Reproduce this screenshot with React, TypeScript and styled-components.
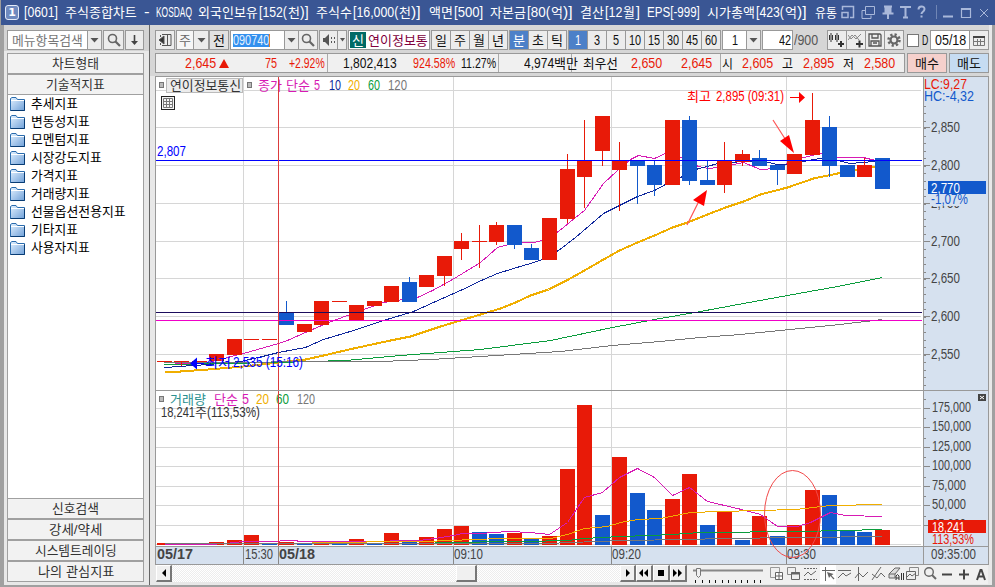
import React, { useLayoutEffect, useRef, useState } from 'react';
import styled, { createGlobalStyle, css } from 'styled-components';

const FONT = `"Liberation Sans Narrow", "Liberation Sans", "Noto Sans CJK KR", sans-serif`;
const RED = '#e81a08';
const BLUE = '#1259cc';
const MAGENTA = '#d71ab4';
const NAVY = '#10289c';
const GOLD = '#f0ae00';
const GREEN = '#0a9c3c';
const GRAY = '#777777';

const Global = createGlobalStyle`
  body { margin: 0; background: #e8e8e8; }
  * { box-sizing: border-box; }
`;

/* ---------- text fitted to a fixed column ---------- */

const isHangul = (t: string) => /[가-힣]/.test(t);

const FitBox = styled.span<{ $w: number; $ml?: number; $c?: string; $s: number }>`
  display: inline-block;
  flex: none;
  width: ${p => p.$w}px;
  height: 17px;
  line-height: 17px;
  margin-left: ${p => p.$ml ?? 0}px;
  color: ${p => p.$c ?? 'inherit'};
  font-size: ${p => p.$s}px;
  white-space: nowrap;
  text-align: left;
`;
const FitInner = styled.span`
  display: inline-block;
  transform-origin: 0 50%;
  line-height: 17px;
`;

function Fit({ w, ml, c, s, children }: { w: number; ml?: number; c?: string; s?: number; children: string }) {
  const ref = useRef<HTMLSpanElement>(null);
  const [k, setK] = useState(1);
  useLayoutEffect(() => {
    if (ref.current) setK(w / ref.current.offsetWidth);
  }, [w, children]);
  return (
    <FitBox $w={w} $ml={ml} $c={c} $s={s ?? (isHangul(children) ? 13 : 14.5)}>
      <FitInner ref={ref} style={{ transform: `scaleX(${k})` }}>{children}</FitInner>
    </FitBox>
  );
}

/* ---------- frame ---------- */

const Win = styled.div`
  width: 995px;
  height: 587px;
  overflow: hidden;
  display: flex;
  flex-direction: column;
  font-family: ${FONT};
  font-size: 13px;
  color: #111;
  background: #9c9c9c;
`;
const TitleBar = styled.header`
  height: 25px;
  margin-left: 1px;
  display: flex;
  align-items: center;
  background: #3a5694;
  color: #fff;
`;
const Badge = styled.span`
  width: 14px;
  height: 15px;
  margin: 0 5px 0 4px;
  border: 1px solid #e4ebf8;
  border-radius: 3px;
  background: #6f8abf;
  font: bold 11px/13px "DejaVu Sans", sans-serif;
  text-align: center;
`;
const TitleIcons = styled.svg`
  margin-left: 4px;
  flex: none;
`;
const Body = styled.div`
  height: 562px;
  display: flex;
  background: #e8e8e8;
  border: solid #a0a0a0;
  border-width: 0 3px 2px 4px;
`;
const Side = styled.aside`
  width: 146px;
  flex: none;
  padding: 5px 5px 0 3px;
  border-right: 1px solid #666;
  background: linear-gradient(#d4d4d4 0 26px, #e8e8e8 26px);
`;
const Main = styled.main`
  width: 839px;
  flex: none;
  padding: 5px 0 0 5px;
  background: linear-gradient(#d6d6d6 0 51px, #e8e8e8 51px);
`;

/* ---------- toolbar ---------- */

const Bar = styled.div`
  display: flex;
  align-items: center;
  height: 20px;
  margin-bottom: 3px;
`;
const Cell = styled.div<{ $w: number; $ml?: number; $bg?: string; $c?: string; $join?: boolean }>`
  width: ${p => p.$w}px;
  height: 20px;
  flex: none;
  display: flex;
  align-items: center;
  justify-content: center;
  margin-left: ${p => p.$ml ?? 0}px;
  border: 1px solid #999;
  ${p => p.$join && css`border-left: 0;`}
  background: ${p => p.$bg ?? '#ececec'};
  color: ${p => p.$c ?? '#111'};
  overflow: hidden;
`;
const Selected = styled.span`
  background: #3390ee;
  height: 13px;
  display: flex;
  align-items: center;
  border-right: 1px solid #e08030;
  margin-right: 13px;
`;
const NewTag = styled.span`
  width: 16px;
  height: 16px;
  background: #006a66;
  color: #fff;
  display: flex;
  justify-content: center;
  align-items: center;
`;
const Check = styled.span`
  width: 13px;
  height: 13px;
  margin: 0 3px 0 3px;
  background: #fff;
  border: 1px solid #777;
`;
const Drop = () => <svg width="9" height="6"><path d="M0.5 1h8L4.5 5.5z" fill="#555" /></svg>;
const Lens = () => (
  <svg width="16" height="16" fill="none" stroke="#666">
    <circle cx="6.5" cy="6.5" r="4" strokeWidth="1.6" /><path d="M9.5 9.5l4.5 4.5" strokeWidth="2.2" />
  </svg>
);

const Quote = styled.div`
  width: 750px;
  height: 20px;
  display: flex;
  border: 1px solid #999;
  background: #f0f0f0;
`;
const QuoteGroup = styled.div<{ $w: number }>`
  width: ${p => p.$w}px;
  flex: none;
  display: flex;
  align-items: center;
  border-right: 1px solid #aaa;
  &:last-child { border-right: 0; }
`;
const Up = styled.svg`margin-left: 3px;`;

/* ---------- sidebar ---------- */

const Header = styled.div<{ $open?: boolean }>`
  height: ${p => (p.$open ? 20 : 21)}px;
  border: 1px solid #a0a0a0;
  border-bottom-width: ${p => (p.$open ? 0 : 1)}px;
  display: flex;
  align-items: center;
  justify-content: center;
  background: #f2f2f2;
  color: #333;
`;
const List = styled.ul`
  height: 404px;
  margin: 0;
  padding: 0 0 0 2px;
  list-style: none;
  background: #fff;
  border: solid #a0a0a0;
  border-width: 1px 1px 0 1px;
`;
const Item = styled.li`
  height: 18px;
  display: flex;
  align-items: center;
  padding-bottom: 1px;
  color: #000;
`;
const Folder = () => (
  <svg width="15" height="14" viewBox="0 0 15 14">
    <defs><linearGradient id="fo" x1="0" y1="0" x2="1" y2="1"><stop offset="0" stopColor="#e4f2ff" /><stop offset="1" stopColor="#6fa0d8" /></linearGradient></defs>
    <path d="M.5 13.5v-12L2 .5h4L7.5 2.5h7v11z" fill="url(#fo)" stroke="#2a6cae" />
    <path d="M1 3.500h13" stroke="#fff" /><path d="M.5 13.500h14v-10" fill="none" stroke="#083c74" />
  </svg>
);

/* ---------- chart ---------- */

const Chart = styled.section`
  width: 834px;
  height: 489px;
  display: grid;
  grid-template-columns: 767px 64px;
  grid-template-rows: 313px 155px 17px;
  gap: 1px;
  background: #999;
  border: 1px solid #999;
`;
const Pane = styled.svg<{ $bg: string; $over?: boolean }>`
  display: block;
  width: 100%;
  height: 100%;
  background: ${p => p.$bg};
  font-family: ${FONT};
  ${p => p.$over && css`overflow: visible; position: relative; z-index: 1;`}
`;

function Tx({ x, y, w, c = '#444', s, b, children }: { x: number; y: number; w: number; c?: string; s?: number; b?: boolean; children: string }) {
  return (
    <text x={x} y={y} textLength={w} lengthAdjust="spacingAndGlyphs" fill={c} fontSize={s ?? (isHangul(children) ? 13 : 14.5)} fontWeight={b ? 700 : 400}>{children}</text>
  );
}

// left, body top, body bottom, wick top, wick bottom, rising, volume top
type Candle = [number, number, number, number, number, number, number];
const candles: Candle[] = [
  [157, 361, 362, 361, 362, 1, 543], [174, 361, 362, 361, 366, 1, 544], [192, 361, 362, 361, 362, 1, 544],
  [209, 354, 361, 354, 361, 1, 542], [227, 339, 355, 339, 355, 1, 540], [244, 339, 340, 339, 340, 1, 535],
  [262, 339, 340, 339, 340, 1, 544], [279, 312, 325, 301, 325, 0, 542], [297, 324, 332, 324, 332, 1, 544],
  [314, 301, 325, 301, 325, 1, 541], [332, 301, 302, 301, 302, 1, 544], [349, 305, 320, 305, 320, 1, 539],
  [367, 301, 306, 301, 306, 1, 544], [384, 286, 302, 286, 302, 1, 533], [402, 282, 302, 277, 302, 0, 541],
  [419, 275, 287, 275, 287, 1, 537], [437, 256, 276, 256, 286, 1, 529], [454, 241, 249, 233, 260, 1, 526],
  [472, 241, 242, 225, 268, 1, 532], [489, 225, 242, 222, 245, 1, 534], [507, 225, 245, 225, 249, 0, 533],
  [524, 248, 260, 244, 260, 0, 538], [542, 218, 260, 218, 260, 1, 536], [560, 169, 219, 154, 223, 1, 469],
  [577, 160, 177, 120, 208, 1, 405], [595, 116, 151, 116, 166, 1, 515], [612, 160, 170, 142, 211, 1, 457],
  [630, 160, 166, 160, 204, 0, 493], [647, 165, 185, 160, 196, 0, 510], [665, 120, 185, 120, 185, 1, 499],
  [682, 120, 181, 116, 185, 0, 474], [700, 180, 185, 161, 185, 0, 525], [717, 161, 185, 142, 193, 1, 512],
  [735, 154, 162, 150, 166, 1, 540], [752, 158, 166, 150, 166, 0, 516], [770, 165, 170, 165, 185, 0, 536],
  [787, 154, 174, 154, 174, 1, 525], [805, 120, 155, 93, 155, 1, 490], [822, 127, 166, 116, 177, 0, 495],
  [840, 165, 177, 165, 177, 0, 531], [857, 165, 177, 158, 177, 1, 532], [875, 158, 189, 158, 189, 0, 530],
];
const blueVolumes = new Set([262, 297, 332, 367, 402, 472, 489, 524, 595, 630, 647, 700, 735, 770, 822, 840, 857]);

const ma = {
  m: '164,364 208,362 250,351 278,343 287,340 305,332 328,322 363,309 383,302 417,297 432,290 452,279 462,273 480,262 497,247 508,244 522,242 533,242 542,240 558,231 575,217 584,210 603,183 617,170 630,159 638,155 654,158 665,153 682,157 698,166 708,168 717,167 743,162 760,169 775,168 787,163 803,157 820,153 837,157 863,157 875,160 883,160',
  n: '164,367 208,364 240,361 262,356 278,352 305,347 323,339 353,330 383,320 413,311 433,302 460,290 483,279 497,273 513,268 530,263 542,259 558,250 575,237 603,213 617,206 637,196 654,190 665,184 682,176 698,168 707,166 717,163 743,161 760,160 777,164 793,164 807,160 820,158 837,160 850,163 873,161 883,161',
  y: '164,371 180,371 208,369 243,366 287,361 305,359 323,355 353,348 390,340 410,336 440,326 480,314 500,308 515,302 530,295 548,289 566,280 584,270 603,259 619,250 637,242 654,235 672,227 687,222 707,214 725,207 743,201 760,194 787,187 813,178 837,173 857,169 875,166 883,165',
  g: '164,364 278,362 310,361 345,360 400,355 480,349 550,340 612,327 654,319 700,311 743,303 787,295 837,286 882,277',
  k: '164,362 380,361 430,359 480,356 560,351 612,345 660,341 700,337 740,334 790,329 830,325 865,321 882,319',
};
const vma = {
  m: '164,544 208,544 225,543 243,541 278,541 281,540 296,540 298,541 380,541 400,540 418,540 435,538 453,535 462,533 480,533 508,531 530,532 549,534 567,522 584,497 602,492 619,477 637,468 654,477 672,495 689,487 707,501 737,508 760,514 777,526 797,526 810,522 830,512 845,515 882,516',
  y: '312,542 420,541 453,540 470,539 505,538 550,538 567,534 584,528 607,526 620,522 637,519 660,518 690,512 720,511 795,509 830,505 882,504',
  g: '435,542 525,541 567,540 584,538 620,536 650,535 672,534 700,532 800,531 882,529',
  k: '164,543 550,543 567,542 600,541 620,540 690,539 720,538 800,537 882,536',
};
const Line = ({ p, c, w = 1 }: { p: string; c: string; w?: number }) => (
  <polyline points={p} transform="translate(.5 .5)" fill="none" stroke={c} strokeWidth={w} shapeRendering="crispEdges" />
);
const columns = [243, 453, 611, 786];
const priceRows: [number, string][] = [[127, '2,850'], [165, '2,800'], [203, '2,750'], [241, '2,700'], [278, '2,650'], [316, '2,600'], [354, '2,550']];
const volumeRows: [number, string][] = [[408, '175,000'], [427, '150,000'], [447, '125,000'], [466, '100,000'], [486, '75,000'], [505, '50,000'], [525, '25,000']];

const Marker = ({ x, y }: { x: number; y: number }) => <rect x={x + 0.5} y={y + 0.5} width="4" height="5" fill="#bbb" stroke="#777" />;

function PricePane() {
  return (
    <Pane $bg="#fff" viewBox="156 77 767 313">
      <g fill="#d6d6d6">
        {[90, ...priceRows.map(r => r[0])].map(y => <rect key={y} x="156" y={y} width="765" height="1" />)}
        {columns.map(x => <rect key={x} x={x} y="77" width="1" height="313" />)}
      </g>
      <Line p={ma.m} c={MAGENTA} />
      <Line p={ma.n} c={NAVY} />
      <Line p={ma.y} c={GOLD} w={2} />
      <Line p={ma.g} c={GREEN} />
      <Line p={ma.k} c={GRAY} />
      {candles.map(([x, t, b, wt, wb, up]) => (
        <g key={x} fill={up ? RED : BLUE}>
          <rect x={x} y={t} width="15" height={b - t} />
          <rect x={x + 7} y={wt} width="1" height={wb - wt} />
        </g>
      ))}
      <rect x="156" y="312" width="766" height="1" fill="#1c0c5c" />
      <rect x="156" y="320" width="766" height="1" fill="#f000c8" />
      <rect x="156" y="160" width="766" height="1" fill="#0000ff" />
      <rect x="166.500" y="78.500" width="76" height="14" fill="#ececec" stroke="#bbb" />
      <Marker x={159} y={82} /><Marker x={247} y={82} />
      <Tx x={170} y={90} w={71} c="#333">연이정보통신</Tx>
      <Tx x={258} y={90} w={24} c={MAGENTA}>종가</Tx>
      <Tx x={286} y={90} w={24} c={MAGENTA}>단순</Tx>
      <Tx x={314} y={90} w={6} c={MAGENTA}>5</Tx>
      <Tx x={329} y={90} w={12} c={NAVY}>10</Tx>
      <Tx x={348} y={90} w={12} c={GOLD}>20</Tx>
      <Tx x={368} y={90} w={12} c={GREEN}>60</Tx>
      <Tx x={388} y={90} w={19} c={GRAY}>120</Tx>
      <rect x="278" y="77" width="1" height="313" fill="#dc3c3c" />
      <g fill="none" stroke="#222"><rect x="161.500" y="96.500" width="13" height="13" fill="#f4f4f4" /><path d="M163.500 98.500h9v9h-9zM163.500 101.500h9M163.500 104.500h9M166.500 98.500v9M169.500 98.500v9" stroke="#777" /></g>
      <Tx x={157} y={156} w={29} c="#00f">2,807</Tx>
      <Tx x={205} y={367} w={26} c="#00f">최저</Tx>
      <Tx x={233} y={367} w={70} c="#00f">2,535 (15:16)</Tx>
      <path d="M190 363.500l7-6v12zM197 363h7v1h-7z" fill="#00f" />
      <Tx x={687} y={101} w={24} c="#f00">최고</Tx>
      <Tx x={716} y={101} w={68} c="#f00">2,895 (09:31)</Tx>
      <path d="M790 97h9v1h-9zM799 92l6 5.500-6 5.500z" fill="#f00" />
      <path d="M773 120l16 25M687 225l12-24" stroke="#f55" strokeWidth="1.200" />
      <path d="M794 153l-14-12 9-6zM707 190l-14 10 11 6z" fill="#f00" />
    </Pane>
  );
}

function VolumePane() {
  return (
    <Pane $bg="#fff" $over viewBox="156 391 767 155">
      <g fill="#d6d6d6">
        {[...volumeRows.map(r => r[0]), 544].map(y => <rect key={y} x="156" y={y} width="765" height="1" />)}
        {columns.map(x => <rect key={x} x={x} y="391" width="1" height="155" />)}
      </g>
      <g>{candles.map(c => <rect key={c[0]} x={c[0]} y={c[6]} width="15" height={545 - c[6]} fill={blueVolumes.has(c[0]) ? BLUE : RED} />)}</g>
      <Line p={vma.m} c={MAGENTA} />
      <Line p={vma.y} c={GOLD} />
      <Line p={vma.g} c={GREEN} />
      <Line p={vma.k} c={GRAY} />
      <Marker x={159} y={396} />
      <Tx x={170} y={404} w={36} c="#2a9090">거래량</Tx>
      <Tx x={214} y={404} w={24} c={MAGENTA}>단순</Tx>
      <Tx x={242} y={404} w={7} c={MAGENTA}>5</Tx>
      <Tx x={256} y={404} w={13} c={GOLD}>20</Tx>
      <Tx x={276} y={404} w={13} c={GREEN}>60</Tx>
      <Tx x={297} y={404} w={18} c={GRAY}>120</Tx>
      <Tx x={161} y={417} w={34} c="#333">18,241</Tx>
      <Tx x={195} y={417} w={12} c="#333">주</Tx>
      <Tx x={207} y={417} w={53} c="#333">(113,53%)</Tx>
      <rect x="278" y="391" width="1" height="155" fill="#dc3c3c" />
      <ellipse cx="792.500" cy="514" rx="28" ry="43.500" fill="none" stroke="#f24a4a" />
    </Pane>
  );
}

function PriceAxis() {
  const minor: number[] = [];
  for (let i = 0; i < 38; i++) minor.push(Math.round(105.500 + i * 7.550));
  return (
    <Pane $bg="#d6e1ef" viewBox="924 77 64 313">
      {minor.map(y => <rect key={y} x="924" y={y} width="2" height="1" fill="#888" />)}
      {priceRows.map(([y, t]) => (
        <g key={y}><rect x="924" y={y} width="6" height="1" fill="#888" /><Tx x={931} y={y + 4.500} w={29}>{t}</Tx></g>
      ))}
      <rect x="930" y="193" width="42" height="13" fill="#d6e1ef" />
      <rect x="928" y="181" width="58" height="13" fill={BLUE} />
      <Tx x={931} y={192.500} w={29} c="#fff">2,770</Tx>
      <Tx x={931} y={204} w={37} c={BLUE}>-1,07%</Tx>
      <Tx x={924} y={89} w={43} c={RED}>LC:9,27</Tx>
      <Tx x={924} y={101} w={50} c={BLUE}>HC:-4,32</Tx>
    </Pane>
  );
}

function VolumeAxis() {
  return (
    <Pane $bg="#d6e1ef" viewBox="924 391 64 155">
      {volumeRows.map(([y, t]) => (
        <g key={y}>
          <rect x="924" y={y} width="6" height="1" fill="#888" /><rect x="924" y={y - 9} width="2" height="1" fill="#888" />
          <Tx x={932} y={y + 4} w={t.length === 7 ? 39 : 34}>{t}</Tx>
        </g>
      ))}
      <rect x="930" y="532" width="48" height="13" fill="#d6e1ef" />
      <rect x="928" y="520" width="58" height="13" fill={RED} />
      <Tx x={932} y={531.500} w={33} c="#fff">18,241</Tx>
      <Tx x={932} y={543.500} w={42} c={RED}>113,53%</Tx>
      <rect x="978" y="394" width="8" height="7" fill="#444" /><path d="M980 396l4 3M984 396l-4 3" stroke="#fff" />
    </Pane>
  );
}

function TimeAxis() {
  return (
    <Pane $bg="#d6e1ef" viewBox="156 547 767 17">
      {columns.map(x => <rect key={x} x={x} y="547" width="1" height="17" fill="#888" />)}
      <rect x="278" y="547" width="1" height="17" fill="#888" />
      <Tx x={157} y={559} w={36} b>05/17</Tx>
      <Tx x={245} y={559} w={28}>15:30</Tx>
      <Tx x={279} y={559} w={36} b>05/18</Tx>
      <Tx x={454} y={559} w={29}>09:10</Tx>
      <Tx x={612} y={559} w={29}>09:20</Tx>
      <Tx x={787} y={559} w={29}>09:30</Tx>
    </Pane>
  );
}

/* ---------- bottom bar ---------- */

const Bottom = styled.footer`
  width: 834px;
  height: 19px;
  display: flex;
  padding-left: 1px;
`;
const Push = styled.div<{ $w: number }>`
  width: ${p => p.$w}px;
  height: 17px;
  flex: none;
  display: flex;
  align-items: center;
  justify-content: center;
  background: #f0f0f0;
  border: 1px solid #fff;
  border-right: 2px solid #777;
  border-bottom: 2px solid #777;
`;
const Track = styled.div<{ $w: number }>`
  width: ${p => p.$w}px;
  height: 17px;
  flex: none;
  background: repeating-conic-gradient(#fff 0 25%, #ededed 0 50%) 0 0 / 2px 2px;
`;
const Tools = styled.svg`flex: none; background: #f0f0f0;`;
const Glyph = ({ d }: { d: string }) => <svg width="12" height="10" viewBox="0 0 12 10"><path d={d} fill="#000" /></svg>;

const periods = ['일', '주', '월', '년'];
const units = ['분', '초', '틱'];
const minutes = ['1', '3', '5', '10', '15', '30', '45', '60'];
const folders = ['추세지표', '변동성지표', '모멘텀지표', '시장강도지표', '가격지표', '거래량지표', '선물옵션전용지표', '기타지표', '사용자지표'];
const titleParts: [string, number, number][] = [
  ['[0601]', 0, 34], ['주식종합차트', 7, 72], ['-', 7, 6], ['KOSDAQ', 6, 36],
  ['외국인보유', 6, 60], ['[152(', 1, 28], ['천', 1, 12], [')]', 0, 9],
  ['주식수', 7, 36], ['[16,000(', 1, 45], ['천', 1, 12], [')]', 0, 10],
  ['액면', 8, 24], ['[500]', 1, 29], ['자본금', 7, 36], ['[80(', 1, 23], ['억', 1, 12], [')]', 0, 10],
  ['결산', 7, 24], ['[12', 1, 17], ['월', 1, 12], [']', 1, 4], ['EPS[-999]', 7, 53],
  ['시가총액', 7, 48], ['[423(', 1, 28], ['억', 1, 12], [')]', 0, 10], ['유통', 8, 22],
];

function Toolbar() {
  return (
    <Bar>
      <Cell $w={20}><svg width="14" height="14" fill="none" stroke="#555"><path d="M4 1.500h9v11H4M9.500 2v10" /><path d="M1 7l5-4v8z" fill="#333" /><path d="M2.500 2v2M2.500 10v2" /></svg></Cell>
      <Cell $w={18} $ml={1} $bg="#f6f6f6"><Fit w={12} c="#666">주</Fit></Cell>
      <Cell $w={15} $join><Drop /></Cell>
      <Cell $w={20} $ml={0} $bg="#e2e2e2"><Fit w={12}>전</Fit></Cell>
      <Cell $w={55} $ml={1} $bg="#fff"><Selected><Fit w={36} c="#e4f0ff">090740</Fit></Selected></Cell>
      <Cell $w={14} $join><Drop /></Cell>
      <Cell $w={19} $join><Lens /></Cell>
      <Cell $w={19} $ml={1}><svg width="14" height="12" fill="#555"><path d="M1 4h2l4-4v12l-4-4H1z" /><path d="M9 3h1v2H9zM9 7h1v2H9zM12 3h1v2h-1zM12 7h1v2h-1z" /></svg></Cell>
      <Cell $w={9} $join><svg width="5" height="4"><path d="M0 0h5L2.500 3.500z" fill="#555" /></svg></Cell>
      <Cell $w={82} $ml={1} $bg="#fff"><NewTag><Fit w={12}>신</Fit></NewTag><Fit w={60} ml={2} c="#80003c">연이정보통</Fit></Cell>
      {periods.map((p, i) => <Cell key={p} $w={i ? 19 : 20} $ml={i ? 0 : 1} $join={i > 0}><Fit w={12}>{p}</Fit></Cell>)}
      {units.map((p, i) => <Cell key={p} $w={i ? 19 : 20} $ml={i ? 0 : 1} $join={i > 0} $bg={i ? undefined : '#4c80c8'} $c={i ? undefined : '#fff'}><Fit w={12}>{p}</Fit></Cell>)}
      {minutes.map((p, i) => <Cell key={p} $w={i ? 19 : 20} $ml={i ? 0 : 1} $join={i > 0} $bg={i ? undefined : '#4c80c8'} $c={i ? undefined : '#fff'}><Fit w={p.length * 6}>{p}</Fit></Cell>)}
      <Cell $w={25} $ml={1} $bg="#fff"><Fit w={6}>1</Fit></Cell>
      <Cell $w={14} $join><Drop /></Cell>
      <Cell $w={31} $ml={1} $bg="#fff"><Fit w={12} ml={14}>42</Fit></Cell>
      <Fit w={24} ml={1} c="#555">/900</Fit>
      <Cell $w={20} $ml={9}><svg width="16" height="16" fill="#333"><path d="M0 3h4v5H0zM1.500 1v9h1V1zM6 3h4v5H6zM7.500 1v9h1V1zM9 11h6v2H9zM11 9h2v6h-2z" /></svg></Cell>
      <Cell $w={19} $join><svg width="16" height="16"><path d="M0 8l4-5 4 4 5-5M0 3l3 4 4-4 4 5" fill="none" stroke="#888" /><path d="M8 11h7v2H8zM10.500 8.500h2v7h-2z" fill="#333" /></svg></Cell>
      <Cell $w={19} $join><svg width="14" height="14" fill="none" stroke="#555" strokeWidth="1.300"><path d="M1 1h11l1 1v11H1zM4 1v4h6V1M3 13V8h8v5M5 10h4" /></svg></Cell>
      <Cell $w={19} $join><svg width="14" height="14"><circle cx="7" cy="7" r="5.500" fill="none" stroke="#666" strokeWidth="2.500" strokeDasharray="2.200 2.100" /><circle cx="7" cy="7" r="3.500" fill="none" stroke="#666" strokeWidth="2.200" /></svg></Cell>
      <Check />
      <Fit w={6}>D</Fit>
      <Cell $w={40} $ml={2} $bg="#fff"><Fit w={31}>05/18</Fit></Cell>
      <Cell $w={19} $join><svg width="12" height="11" fill="none" stroke="#777"><path d="M.5 1.500h11v9H.5zM4.500 4v6M7.500 4v6M1 6.500h10" /><path d="M0 2h12" stroke="#444" strokeWidth="2" /></svg></Cell>
    </Bar>
  );
}

export default function App() {
  return (
    <Win>
      <Global />
      <TitleBar>
        <Badge>1</Badge>
        {titleParts.map(([t, ml, w], i) => <Fit key={i} w={w} ml={ml} s={isHangul(t) ? 13 : 14}>{t}</Fit>)}
        <TitleIcons width="150" height="25" viewBox="841 0 150 25" fill="none" stroke="#a9b8da">
          <path d="M842.500 10V6.500h11v11H850M842 12.500h6v5h-6z" strokeWidth="1.500" />
          <path d="M865.500 6.500h9v8h-9zM865 10.500h-3v8h9v-3" />
          <path d="M884 6.500h8M882.500 13.500h11M888 14v5" strokeWidth="2" />
          <path d="M885 7h6v6h-6z" fill="#a9b8da" />
          <path d="M901 8V7h9v1M905.500 7v11M903 17.500h5" strokeWidth="2" />
          <path d="M918.500 9.500c0-4 6-4 6-.5 0 3-3 2.500-3 5M921.500 15.500v2" strokeWidth="2" />
          <path d="M936.500 5v14" stroke="#7086b5" />
          <path d="M943 16.500h10" strokeWidth="2" />
          <path d="M961.500 8.500h9v9h-9zM961 9.500h10" strokeWidth="1.200" />
          <path d="M980 9l8 8M988 9l-8 8" />
        </TitleIcons>
      </TitleBar>
      <Body>
        <Side>
          <Bar>
            <Cell $w={81} $bg="#fff"><Fit w={71} c="#777">메뉴항목검색</Fit></Cell>
            <Cell $w={14} $join><Drop /></Cell>
            <Cell $w={21} $ml={1}><Lens /></Cell>
            <Cell $w={19} $ml={1}><svg width="9" height="12"><path d="M3.700 1h1.600v6H8l-3.500 4L1 7h2.700z" fill="#444" /></svg></Cell>
          </Bar>
          <Header><Fit w={47}>차트형태</Fit></Header>
          <Header $open><Fit w={59}>기술적지표</Fit></Header>
          <List>
            {folders.map(f => <Item key={f}><Folder /><Fit w={f.length * 12 - 1} ml={6}>{f}</Fit></Item>)}
          </List>
          <Header><Fit w={47}>신호검색</Fit></Header>
          <Header><Fit w={53}>강세/약세</Fit></Header>
          <Header><Fit w={82}>시스템트레이딩</Fit></Header>
          <Header><Fit w={76}>나의 관심지표</Fit></Header>
        </Side>
        <Main>
          <Toolbar />
          <Bar>
            <Quote>
              <QuoteGroup $w={172}>
                <Fit w={31} ml={29} c={RED}>2,645</Fit>
                <Up width="10" height="9"><path d="M5 0l5 9H0z" fill={RED} /></Up>
                <Fit w={12} ml={36} c={RED}>75</Fit><Fit w={36} ml={12} c={RED}>+2.92%</Fit>
              </QuoteGroup>
              <QuoteGroup $w={171}><Fit w={54} ml={15}>1,802,413</Fit><Fit w={42} ml={16} c={RED}>924.58%</Fit><Fit w={35} ml={6}>11.27%</Fit></QuoteGroup>
              <QuoteGroup $w={73}><Fit w={30} ml={25}>4,974</Fit><Fit w={24}>백만</Fit></QuoteGroup>
              <QuoteGroup $w={149}><Fit w={35} ml={11}>최우선</Fit><Fit w={31} ml={13} c={RED}>2,650</Fit><Fit w={31} ml={19} c={RED}>2,645</Fit></QuoteGroup>
              <QuoteGroup $w={183}>
                <Fit w={11} ml={1}>시</Fit><Fit w={31} ml={9} c={RED}>2,605</Fit>
                <Fit w={11} ml={9}>고</Fit><Fit w={31} ml={10} c={RED}>2,895</Fit>
                <Fit w={11} ml={9}>저</Fit><Fit w={31} ml={10} c={RED}>2,580</Fit>
              </QuoteGroup>
            </Quote>
            <Cell $w={40} $ml={2} $bg="#f5d0cc"><Fit w={24}>매수</Fit></Cell>
            <Cell $w={40} $ml={2} $bg="#c6dcf2"><Fit w={24}>매도</Fit></Cell>
          </Bar>
          <Chart>
            <PricePane />
            <PriceAxis />
            <VolumePane />
            <VolumeAxis />
            <TimeAxis />
            <Pane $bg="#d6e1ef" viewBox="924 547 64 17"><Tx x={931} y={559} w={45}>09:35:00</Tx></Pane>
          </Chart>
          <Bottom>
            <Push $w={16}><Glyph d="M4 5l4-4v8z" /></Push>
            <Track $w={284} />
            <Push $w={21} />
            <Track $w={143} />
            <Push $w={16}><Glyph d="M4 1l4 4-4 4z" /></Push>
            <Push $w={17}><Glyph d="M1 5l4-4v8zM6 5l4-4v8z" /></Push>
            <Push $w={17}><Glyph d="M3 2h6v6H3z" /></Push>
            <Push $w={17}><Glyph d="M1 1l4 4-4 4zM6 1l4 4-4 4z" /></Push>
            <Tools width="301" height="19" viewBox="687 565 301 19" fill="none" stroke="#666">
              <path d="M693 570.500h70" strokeWidth="2" stroke="#888" />
              <path d="M695.500 580v3M702.500 580v3M709.500 580v3M715.500 580v3M722.500 580v3M728.500 580v3M735.500 580v3M741.500 580v3M747.500 580v3M754.500 580v3M760.500 580v3" stroke="#111" />
              <path d="M696.500 568.500h4v7l-2 2-2-2z" fill="#f0f0f0" stroke="#777" />
              <path d="M770.500 567.500h9v10h-9z" stroke="#999" /><path d="M775.500 572.500h7v7h-7zM779 572v7M775 576h7" fill="#fff" />
              <path d="M787.500 567.500h8v7h-8z" stroke="#888" /><path d="M791.500 572.500h8v7h-8z" fill="#f0f0f0" /><path d="M791 573.500h9" strokeWidth="2" />
              <path d="M804 568.500h13M804 579.500h13" strokeDasharray="2 1" /><path d="M804 576l4-4 3 3 5-4" />
              <path d="M820 565h16v19h-16z" fill="#fff" stroke="none" /><path d="M822 570.500h13M825.500 567v14" /><path d="M827 572l2 6 1.500-2 3 3.500 1-1-3-3 2-1.500z" fill="#666" stroke="none" />
              <path d="M838 570.500h13M838 578l5-5 3 3 5-3" /><path d="M858.500 567v14M855 578l4-5 4 4 5-5" />
              <path d="M872 580l9-13M872 574l5 4 4-5 4 4" />
              <path d="M889 574l6-6h5l-5 6zM889 574v4h6v-4" fill="#ddd" /><path d="M896 580v-4l1.500-1.500 1.500 1.500v4M896 578h3M901.500 573v7M903.500 573v7" stroke="#333" />
              <path d="M909.500 567.500h9v8h-9z" stroke="#888" /><path d="M906.500 571.500h9v8h-9z" fill="#eee" /><path d="M907 577l3-3 2 2 4-3" />
              <circle cx="929" cy="572" r="4.300" strokeWidth="1.400" /><path d="M932 575l4 4" strokeWidth="2" />
              <path d="M942 574.500h10M959 574.500h10M964 569.500v10" stroke="#444" strokeWidth="2" />
              <path d="M977 580l3.500-10h1L985 580M978.500 576.500h5" stroke="#444" strokeWidth="2" />
            </Tools>
          </Bottom>
        </Main>
      </Body>
    </Win>
  );
}
